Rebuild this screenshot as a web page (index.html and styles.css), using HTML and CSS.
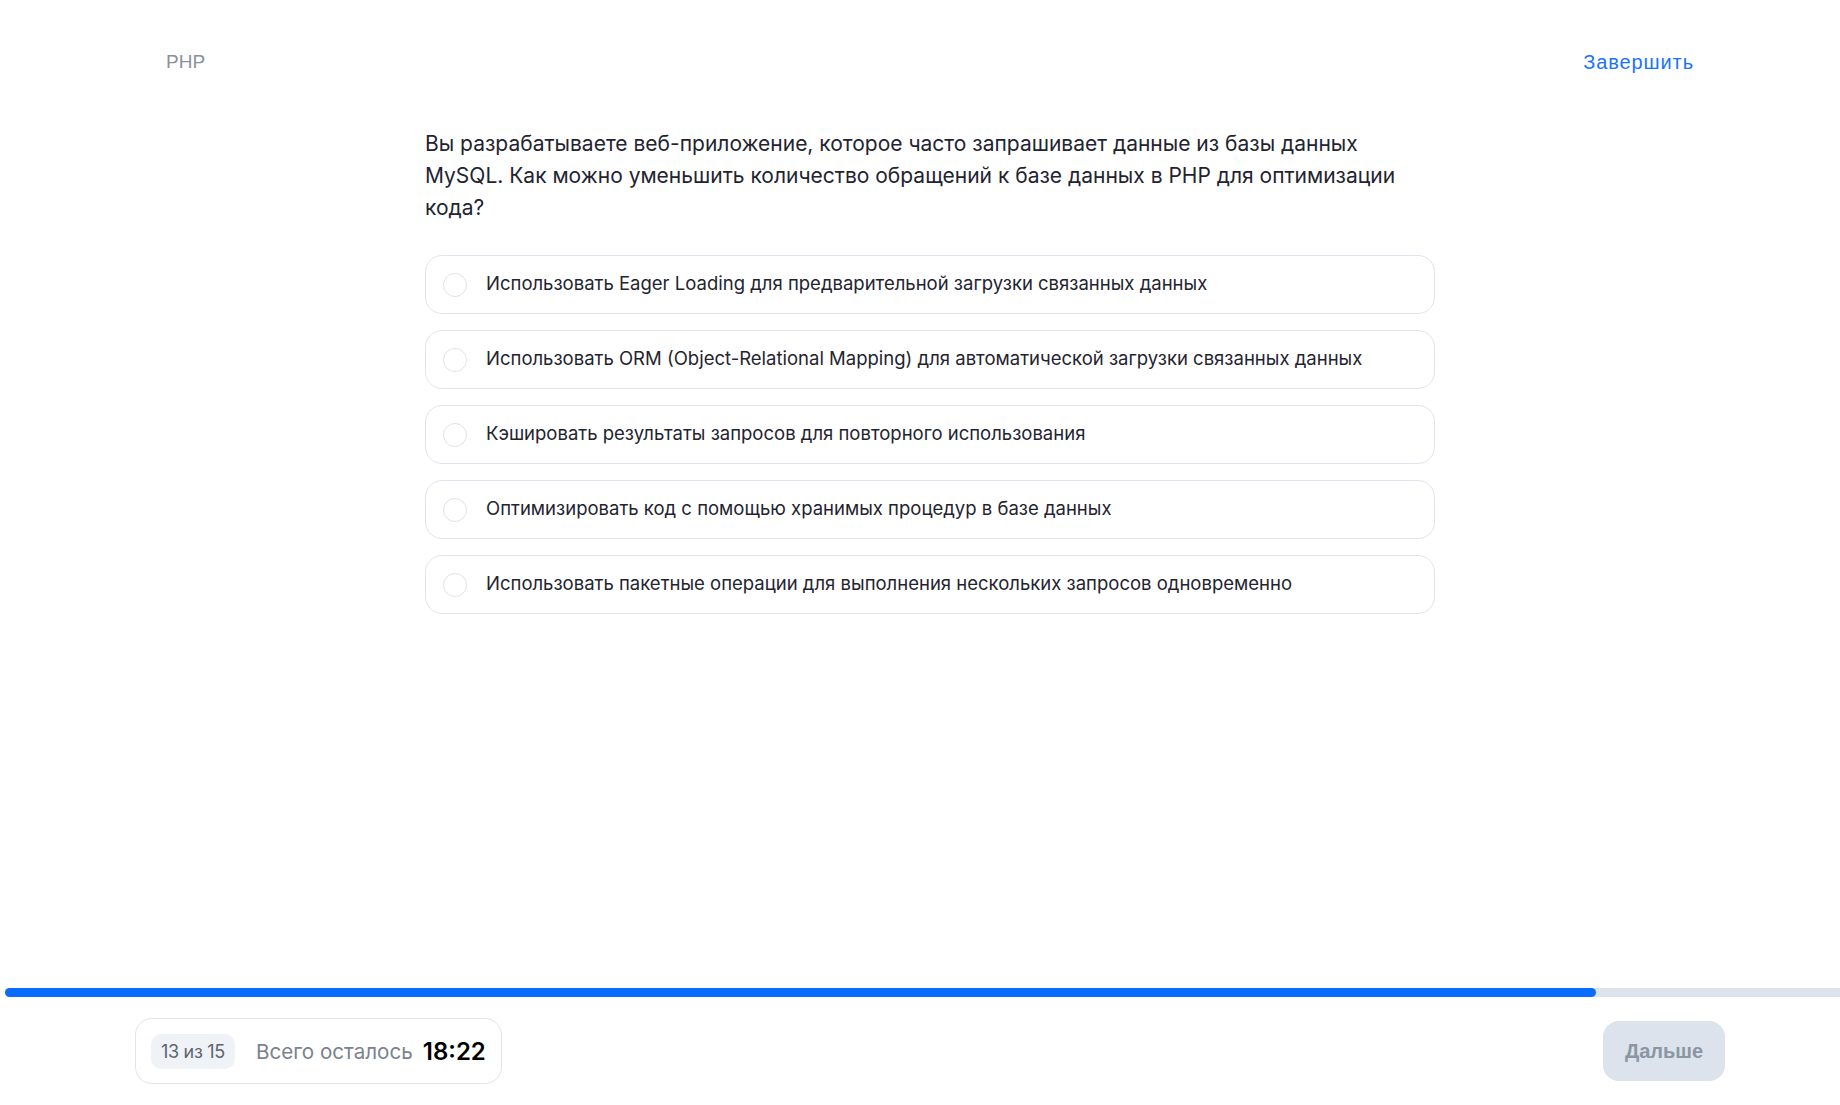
FILE: index.html
```html
<!DOCTYPE html>
<html lang="ru">
<head>
<meta charset="utf-8">
<title>PHP тест</title>
<link rel="stylesheet" href="styles.css">
</head>
<body>
<div class="page">
  <header class="top">
    <span class="topic">PHP</span>
    <a class="finish" href="#">Завершить</a>
  </header>
  <main class="main">
    <div class="quiz">
      <p class="question">Вы разрабатываете веб-приложение, которое часто запрашивает данные из базы данных MySQL. Как можно уменьшить количество обращений к базе данных в PHP для оптимизации кода?</p>
      <ul class="options">
        <li class="option"><span class="radio"></span><span class="label">Использовать Eager Loading для предварительной загрузки связанных данных</span></li>
        <li class="option"><span class="radio"></span><span class="label">Использовать ORM (Object-Relational Mapping) для автоматической загрузки связанных данных</span></li>
        <li class="option"><span class="radio"></span><span class="label">Кэшировать результаты запросов для повторного использования</span></li>
        <li class="option"><span class="radio"></span><span class="label">Оптимизировать код с помощью хранимых процедур в базе данных</span></li>
        <li class="option"><span class="radio"></span><span class="label">Использовать пакетные операции для выполнения нескольких запросов одновременно</span></li>
      </ul>
    </div>
  </main>
  <div class="progress"><div class="progress-fill" style="width: 86.7%"></div></div>
  <footer class="bottom">
    <div class="status">
      <span class="counter">13 из 15</span>
      <span class="remain">Всего осталось</span>
      <span class="time">18:22</span>
    </div>
    <button class="next" type="button">Дальше</button>
  </footer>
</div>
</body>
</html>
```

FILE: styles.css
```css
html, body {
  margin: 0;
  padding: 0;
  background: #ffffff;
}
body {
  font-family: Inter, "Noto Sans", sans-serif;
  color: #1d2330;
}
.page {
  height: 100vh;
  display: flex;
  flex-direction: column;
}
.top {
  display: flex;
  justify-content: space-between;
  align-items: center;
  padding: 49px 146px 0 166px;
  height: 26px;
}
.topic {
  font-family: "Liberation Sans", Arial, sans-serif;
  font-size: 19px;
  color: #8a919b;
}
.finish {
  font-family: "Liberation Sans", Arial, sans-serif;
  font-size: 20px;
  letter-spacing: 0.9px;
  color: #1a73ff;
  text-decoration: none;
}
.main {
  flex: 1;
  display: flex;
  justify-content: center;
  padding-left: 20px;
}
.quiz {
  width: 1010px;
  padding-top: 53px;
}
.question {
  margin: 0 0 31px 0;
  font-size: 21px;
  line-height: 32px;
  color: #1f2430;
}
.options {
  list-style: none;
  margin: 0;
  padding: 0;
  display: flex;
  flex-direction: column;
  gap: 16px;
}
.option {
  height: 57px;
  border: 1px solid #dfe5ee;
  border-radius: 17px;
  display: flex;
  align-items: center;
  padding-left: 17px;
  gap: 19px;
}
.radio {
  width: 22px;
  height: 22px;
  border: 1px solid #dde3ea;
  border-radius: 50%;
  flex: none;
}
.label {
  font-size: 18.5px;
  color: #1f2430;
  padding-bottom: 3px;
}
.progress {
  margin-left: 5px;
  height: 9px;
  background: #dde3ec;
  border-radius: 5px 0 0 5px;
}
.progress-fill {
  height: 100%;
  background: #0a6cff;
  border-radius: 5px;
}
.bottom {
  display: flex;
  justify-content: space-between;
  align-items: center;
  padding: 21px 115px 21px 135px;
}
.status {
  display: flex;
  align-items: center;
  height: 64px;
  border: 1px solid #dfe5ee;
  border-radius: 17px;
  padding: 0 15px;
}
.counter {
  background: #eff2f7;
  border-radius: 10px;
  padding: 0 10px;
  height: 35px;
  line-height: 35px;
  font-size: 18px;
  color: #5c6470;
  letter-spacing: -0.3px;
}
.remain {
  margin-left: 21px;
  font-size: 20.6px;
  color: #7b828d;
}
.time {
  margin-left: 10px;
  font-size: 24px;
  font-weight: 600;
  color: #000000;
}
.next {
  width: 122px;
  height: 60px;
  border: none;
  border-radius: 16px;
  background: #dce3ec;
  color: #8a96a3;
  font-family: "Liberation Sans", Arial, sans-serif;
  font-weight: bold;
  font-size: 20px;
}
```
